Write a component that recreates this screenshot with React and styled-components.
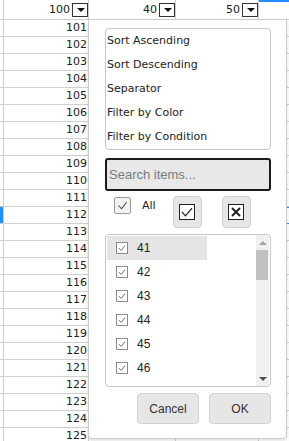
import React from "react";
import styled, { createGlobalStyle } from "styled-components";

const GlobalStyle = createGlobalStyle`
  html, body {
    margin: 0;
    padding: 0;
    overflow: hidden;
    background: #ffffff;
  }
  body {
    font-family: "DejaVu Sans", Verdana, sans-serif;
  }
`;

// only the last row's B/C values peek out under the popup
const rows = [];
for (let n = 101; n <= 125; n++) {
  rows.push({ id: n, a: n, b: n === 125 ? 33 : "", c: n === 125 ? 75 : "" });
}

const items = [41, 42, 43, 44, 45, 46, 47];
const menuItems = [
  "Sort Ascending",
  "Sort Descending",
  "Separator",
  "Filter by Color",
  "Filter by Condition",
];

const CheckMark = ({ color = "#222", width = 1.2 }) => (
  <svg width="100%" height="100%" viewBox="0 0 16 16">
    <polyline
      points="3,8 6.8,12 13,4"
      fill="none"
      stroke={color}
      strokeWidth={width}
    />
  </svg>
);

const App = () => {
  return (
    <>
      <GlobalStyle />
      <Sheet>
        <HeaderRow>
          <Cell />
          <HeadCell>
            100
            <DropButton />
          </HeadCell>
          <HeadCell>
            40
            <DropButton />
          </HeadCell>
          <HeadCell>
            50
            <DropButton />
          </HeadCell>
          <Cell $selectedTop />
        </HeaderRow>
        {rows.map((r) => (
          <Row key={r.id}>
            <Cell $marker={r.id === 112} />
            <Cell>{r.a}</Cell>
            <Cell $pad={7}>{r.b}</Cell>
            <Cell>{r.c}</Cell>
            <Cell $selectedRow={r.id === 112} />
          </Row>
        ))}

        <Popup>
          <Menu>
            {menuItems.map((m) => (
              <MenuItem key={m}>{m}</MenuItem>
            ))}
          </Menu>
          <Search placeholder="Search items..." autoFocus />
          <Controls>
            <AllLabel>
              <BigBox>
                <CheckMark color="#444" width={1.3} />
              </BigBox>
              All
            </AllLabel>
            <IconButton>
              <svg width="16" height="16" viewBox="0 0 16 16">
                <rect x="0.5" y="0.5" width="15" height="15" fill="#fff" stroke="#222" />
                <polyline points="3,8 6.5,11.8 13,4.2" fill="none" stroke="#222" strokeWidth="1.2" />
              </svg>
            </IconButton>
            <IconButton>
              <svg width="16" height="16" viewBox="0 0 16 16">
                <rect x="0.5" y="0.5" width="15" height="15" fill="#fff" stroke="#222" />
                <path d="M4 4 L12 12 M12 4 L4 12" stroke="#222" strokeWidth="2" />
              </svg>
            </IconButton>
          </Controls>
          <List>
            <Items>
              {items.map((it, i) => (
                <Item key={it} $active={i === 0}>
                  <SmallBox>
                    <CheckMark color="#555" width={1.3} />
                  </SmallBox>
                  {it}
                </Item>
              ))}
            </Items>
            <Scrollbar>
              <Arrow $up />
              <Thumb />
              <Track />
              <Arrow />
            </Scrollbar>
          </List>
          <Footer>
            <Button>Cancel</Button>
            <Button>OK</Button>
          </Footer>
        </Popup>
      </Sheet>
    </>
  );
};

const Sheet = styled.div`
  position: relative;
  width: 289px;
  height: 441px;
  overflow: hidden;
  background: #fff;
`;

const Row = styled.div`
  display: grid;
  grid-template-columns: 4px 85px 87px 83px 1fr;
  height: 17px;
  box-sizing: border-box;
  border-bottom: 1px solid #cfcfcf;
`;

const HeaderRow = styled(Row)`
  height: 20px;
`;

const Cell = styled.div`
  box-sizing: border-box;
  border-right: 1px solid #cfcfcf;
  text-align: right;
  padding-right: ${(p) => p.$pad || 1}px;
  font-size: 11px;
  line-height: 16px;
  color: #222;
  background: ${(p) => (p.$marker ? "#1e8fff" : "transparent")};
  border-top: ${(p) => (p.$selectedTop ? "2px solid #1e8fff" : "none")};
  box-shadow: ${(p) =>
    p.$selectedRow ? "inset 0 1px 0 #1e8fff, 0 1px 0 #1e8fff" : "none"};
  &:last-child {
    border-right: none;
  }
`;

const HeadCell = styled(Cell)`
  display: flex;
  align-items: center;
  justify-content: flex-end;
  gap: 2px;
  padding-right: 0;
  line-height: 19px;
`;

const DropButton = styled.span`
  position: relative;
  width: 16px;
  height: 14px;
  box-sizing: border-box;
  border: 1px solid #333;
  background: #fff;
  &::after {
    content: "";
    position: absolute;
    left: 4px;
    top: 4px;
    border-left: 4px solid transparent;
    border-right: 4px solid transparent;
    border-top: 4px solid #111;
  }
`;

const Popup = styled.div`
  position: absolute;
  left: 88px;
  top: 19px;
  width: 199px;
  height: 420px;
  box-sizing: border-box;
  background: #fff;
  border: 1px solid #cccccc;
  border-radius: 0 0 4px 4px;
  box-shadow: 0 2px 4px rgba(0, 0, 0, 0.12);
  padding: 8px 15px 0 16px;
  display: flex;
  flex-direction: column;
`;

const Menu = styled.div`
  height: 122px;
  box-sizing: border-box;
  border: 1px solid #c8c8c8;
  border-radius: 4px;
  display: flex;
  flex-direction: column;
`;

const MenuItem = styled.div`
  height: 24px;
  line-height: 24px;
  padding-left: 1px;
  font-size: 11px;
  color: #222;
  white-space: nowrap;
`;

const Search = styled.input`
  margin-top: 8px;
  height: 33px;
  box-sizing: border-box;
  border: 2px solid #1a1a1a;
  border-radius: 3px;
  background: #e8e8e8;
  padding: 0 2px;
  font-family: "Liberation Sans", Arial, sans-serif;
  font-size: 13px;
  color: #222;
  outline: none;
  &::placeholder {
    color: #7a7a7a;
  }
`;

const Controls = styled.div`
  display: flex;
  align-items: flex-start;
  margin-top: 5px;
  height: 32px;
`;

const AllLabel = styled.label`
  display: flex;
  align-items: center;
  gap: 11px;
  width: 61px;
  margin: 1px 0 0 9px;
  font-size: 11px;
  color: #222;
`;

const BigBox = styled.span`
  display: flex;
  width: 17px;
  height: 17px;
  box-sizing: border-box;
  border: 1.5px solid #9a9a9a;
  border-radius: 2px;
  background: #f2f2f2;
  padding: 1px;
`;

const IconButton = styled.button`
  width: 30px;
  height: 32px;
  margin-right: 20px;
  display: flex;
  align-items: center;
  justify-content: center;
  padding: 0;
  box-sizing: border-box;
  background: #e6e6e6;
  border: 1px solid #d2d2d2;
  border-radius: 4px;
`;

const List = styled.div`
  margin-top: 6px;
  height: 153px;
  box-sizing: border-box;
  border: 1px solid #c8c8c8;
  border-radius: 4px;
  display: flex;
  overflow: hidden;
`;

const Items = styled.div`
  flex: 1;
  padding: 1px 0 0 1px;
  overflow: hidden;
`;

const Item = styled.div`
  width: 100px;
  height: 24px;
  flex-shrink: 0;
  display: flex;
  align-items: center;
  gap: 9px;
  padding-left: 9px;
  box-sizing: border-box;
  background: ${(p) => (p.$active ? "#e5e5e5" : "transparent")};
  font-family: "Liberation Sans", Arial, sans-serif;
  font-size: 12px;
  color: #222;
`;

const SmallBox = styled.span`
  display: flex;
  width: 12px;
  height: 12px;
  box-sizing: border-box;
  border: 1px solid #8a8a8a;
  background: #fff;
`;

const Scrollbar = styled.div`
  width: 13px;
  margin-right: 1px;
  background: #f0f0f0;
  display: flex;
  flex-direction: column;
`;

const Arrow = styled.div`
  height: 15px;
  display: flex;
  align-items: center;
  justify-content: center;
  &::after {
    content: "";
    border-left: 4px solid transparent;
    border-right: 4px solid transparent;
    ${(p) =>
      p.$up
        ? "border-bottom: 4px solid #a3a3a3;"
        : "border-top: 4px solid #505050;"}
  }
`;

const Thumb = styled.div`
  height: 30px;
  margin-right: 1px;
  background: #c1c1c1;
`;

const Track = styled.div`
  flex: 1;
`;

const Footer = styled.div`
  display: flex;
  justify-content: flex-end;
  gap: 10px;
  margin-top: 6px;
`;

const Button = styled.button`
  width: 62px;
  height: 31px;
  box-sizing: border-box;
  background: #e6e6e6;
  border: 1px solid #d0d0d0;
  border-radius: 4px;
  font-family: "Liberation Sans", Arial, sans-serif;
  font-size: 12px;
  color: #333;
  padding: 0;
`;

export default App;
